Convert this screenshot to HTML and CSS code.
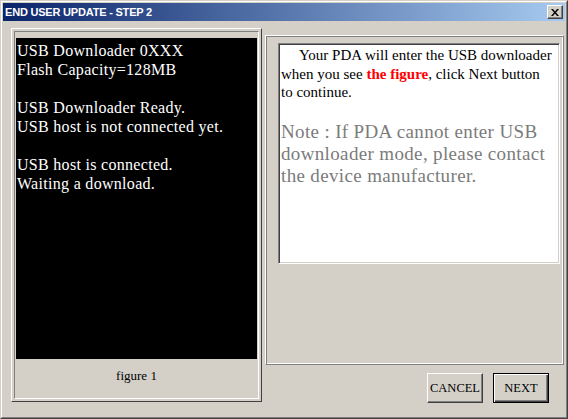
FILE: index.html
```html
<!DOCTYPE html>
<html lang="en">
<head>
<meta charset="UTF-8" />
<title>End User Update - Step 2</title>
<link rel="stylesheet" href="styles.css">
</head>
<body>
  <div class="window">
    <div class="frame">
      <div class="titlebar">
        <span class="title">END USER UPDATE - STEP 2</span>
        <button class="close" type="button" aria-label="Close">
          <svg width="8" height="7" viewBox="0 0 8 7"><path d="M0 0h2l2 2.5L6 0h2L5 3.5 8 7H6L4 4.5 2 7H0l3-3.5z" fill="#000"/></svg>
        </button>
      </div>

      <div class="content">
        <div class="figure-panel">
          <div class="figure-inner">
            <div class="screen">
              <p>USB Downloader 0XXX<br>Flash Capacity=128MB</p>
              <p>USB Downloader Ready.<br>USB host is not connected yet.</p>
              <p>USB host is connected.<br>Waiting a download.</p>
            </div>
            <div class="caption">figure 1</div>
          </div>
        </div>

        <div class="side">
          <div class="info-panel">
            <div class="info-box">
              <p class="lead">Your PDA will enter the USB downloader when you see <b class="hl">the figure</b>, click Next button to continue.</p>
              <p class="note">Note : If PDA cannot enter USB downloader mode, please contact the device manufacturer.</p>
            </div>
          </div>
          <div class="actions">
            <button class="btn" type="button">CANCEL</button>
            <button class="btn btn-default" type="button">NEXT</button>
          </div>
        </div>
      </div>
    </div>
  </div>
</body>
</html>
```

FILE: styles.css
```css
/* Reset and base */
* {
  box-sizing: border-box;
}

body {
  margin: 0;
  background: #d4d0c8;
  font-family: 'Liberation Serif', 'Times New Roman', serif;
}

p {
  margin: 0;
}

/* Window frame */
.window {
  width: 568px;
  height: 419px;
  border: 1px solid;
  border-color: #d4d0c8 #404040 #404040 #d4d0c8;
}

.frame {
  height: 100%;
  border: 1px solid;
  border-color: #fff #808080 #808080 #fff;
  padding: 1px;
  display: flex;
  flex-direction: column;
}

.titlebar {
  height: 18px;
  display: flex;
  align-items: center;
  justify-content: space-between;
  padding: 0 2px 0 2px;
  background: linear-gradient(90deg, #0a246a, #a6caf0);
}

.title {
  color: #fff;
  font-family: 'Liberation Sans', Arial, sans-serif;
  font-weight: 700;
  font-size: 11px;
  letter-spacing: -0.2px;
}

.close {
  width: 16px;
  height: 14px;
  padding: 0;
  display: flex;
  align-items: center;
  justify-content: center;
  background: #d4d0c8;
  border: 1px solid;
  border-color: #fff #404040 #404040 #fff;
  box-shadow: inset -1px -1px #808080;
}

/* Content */
.content {
  flex: 1;
  display: flex;
  gap: 3px;
  padding: 7px 1px 0 8px;
}

.figure-panel {
  width: 251px;
  height: 374px;
  border: 1px solid;
  border-color: #fff #404040 #404040 #fff;
  padding: 2px;
}

.figure-inner {
  height: 100%;
  border: 1px solid;
  border-color: #808080 #fff #fff #808080;
  padding: 6px 1px 0;
  display: flex;
  flex-direction: column;
}

.screen {
  flex: 1;
  background: #000;
  color: #fff;
  font-size: 16px;
  line-height: 19px;
  letter-spacing: 0.3px;
  padding: 3px 0 0 1px;
}

.screen p {
  margin-bottom: 19px;
}

.caption {
  height: 39px;
  display: flex;
  align-items: center;
  justify-content: center;
  padding-bottom: 6px;
  font-size: 13px;
  color: #000;
}

.side {
  width: 299px;
  padding-top: 7px;
  display: flex;
  flex-direction: column;
}

.info-panel {
  height: 330px;
  border: 1px solid;
  border-color: #fff #808080 #808080 #fff;
  box-shadow: inset 1px 1px #808080, inset -1px -1px #fff;
  padding: 7px 0 0 12px;
}

.info-box {
  width: 282px;
  height: 221px;
  background: #fff;
  border: 1px solid;
  border-color: #808080 #fff #fff #808080;
  box-shadow: inset 1px 1px #404040, inset -1px -1px #d4d0c8;
  padding: 2px 5px 0 2px;
}

.lead {
  font-size: 15px;
  line-height: 18.5px;
  text-indent: 18px;
  color: #000;
}

.hl {
  color: #f00;
}

.note {
  margin-top: 19px;
  font-size: 19px;
  line-height: 22px;
  letter-spacing: 0.35px;
  color: #7b7b7b;
}

/* Buttons */
.actions {
  display: flex;
  justify-content: flex-end;
  gap: 10px;
  margin-top: 8px;
  padding-right: 15px;
}

.btn {
  width: 56px;
  height: 30px;
  padding: 0;
  background: #d4d0c8;
  font-family: 'Liberation Serif', 'Times New Roman', serif;
  font-size: 12.5px;
  color: #000;
  border: 1px solid;
  border-color: #fff #404040 #404040 #fff;
  box-shadow: inset -1px -1px #808080;
}

.btn-default {
  border: 1px solid #000;
  box-shadow: inset 1px 1px #fff, inset -1px -1px #404040, inset -2px -2px #808080;
}
```
